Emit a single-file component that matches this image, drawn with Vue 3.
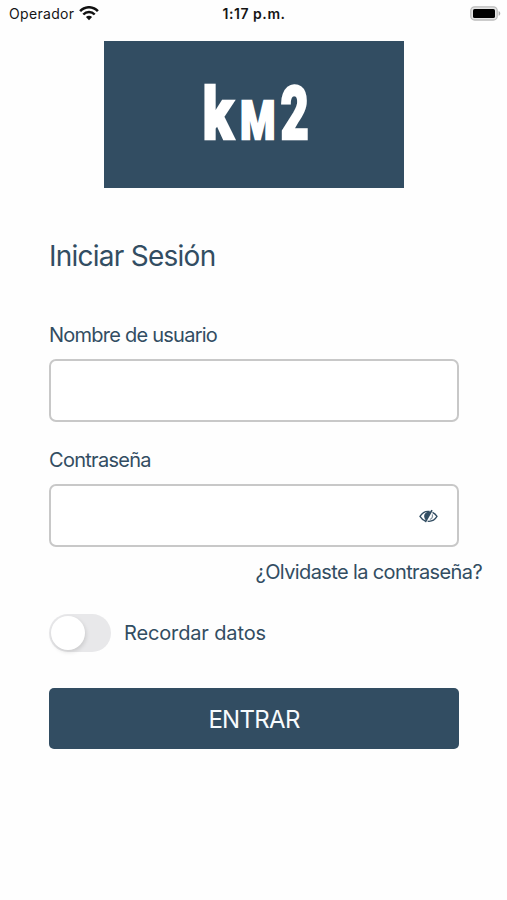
<script setup>
import { ref } from 'vue'

const username = ref('')
const password = ref('')
const remember = ref(false)
const visible = ref(false)
</script>

<template>
  <div class="screen">
    <header class="status">
      <div class="carrier">
        <span class="operator">Operador</span>
        <svg class="wifi" width="20" height="15" viewBox="0 0 20 15" aria-hidden="true">
          <g fill="none" stroke="#111" stroke-width="2.5">
            <path d="M1.1 5.2C6-0.1 14-0.1 18.9 5.2" />
            <path d="M4.3 8.5C7.5 5.2 12.5 5.2 15.7 8.5" />
          </g>
          <path d="M6.9 11C8.7 9.3 11.3 9.3 13.1 11L10 14.2Z" fill="#111" />
        </svg>
      </div>
      <span class="time">1:17 p.m.</span>
      <svg class="battery" width="31" height="15" viewBox="0 0 31 15" aria-hidden="true">
        <rect x="0.8" y="0.8" width="26.4" height="13.2" rx="3.8" fill="#e4e4e4" stroke="#bcbcbc" stroke-width="1.3" />
        <rect x="3" y="3" width="22" height="9" rx="1.6" fill="#000" />
        <path d="M28.6 5C30.8 5.8 30.8 9 28.6 9.8Z" fill="#aaa" />
      </svg>
    </header>

    <main class="content">
      <svg class="logo" width="300" height="147" viewBox="0 0 300 147" role="img">
        <rect width="300" height="147" fill="#324d62" />
        <g class="brand">
          <text transform="translate(98.7 98) scale(0.78 1)" font-size="72">k</text>
          <text transform="translate(136.2 98) scale(0.74 1)" font-size="54">M</text>
          <text transform="translate(176.6 98) scale(0.66 1)" font-size="74">2</text>
        </g>
      </svg>

      <form class="form" @submit.prevent>
        <h1 class="title">Iniciar Sesión</h1>
        <label class="label user-label" for="user">Nombre de usuario</label>
        <div class="field">
          <input id="user" v-model="username" type="text" />
        </div>
        <label class="label pass-label" for="pass">Contraseña</label>
        <div class="field">
          <input id="pass" v-model="password" :type="visible ? 'text' : 'password'" />
          <button class="eye" type="button" @click="visible = !visible">
            <svg width="19" height="15" viewBox="0 0 19 15" aria-hidden="true">
              <path d="M10.5 2.5C6.5 1.8 3 4.2 1 7.4C2.3 9.6 4.3 11.1 6.2 11.8" fill="none" stroke="#324d62" stroke-width="1.4" />
              <path d="M13.5 3.4C15.5 4.4 17 5.8 18 7.4C16 10.7 12.8 12.7 8.6 12.2" fill="none" stroke="#324d62" stroke-width="1.3" />
              <path d="M11.9 2.6C7 2.2 4.8 5 5.2 7.8C5.5 9.4 6.2 10.7 7.2 11.3Z" fill="#324d62" />
              <path d="M13 1.2L6.3 13" stroke="#324d62" stroke-width="1.6" />
              <path d="M13.3 5.3C14 7.7 13 9.5 10.8 10.5" fill="none" stroke="#8293a0" stroke-width="1.2" />
            </svg>
          </button>
        </div>
        <a class="forgot">¿Olvidaste la contraseña?</a>
        <div class="remember">
          <button class="switch" :class="{ on: remember }" type="button" @click="remember = !remember">
            <span class="knob"></span>
          </button>
          <span class="remember-text">Recordar datos</span>
        </div>
        <button class="submit" type="submit"><span class="submit-text">ENTRAR</span></button>
      </form>
    </main>
  </div>
</template>

<style>
body {
  background: #fefefe;
}
</style>

<style scoped>
.screen {
  width: 507px;
  height: 900px;
  overflow: hidden;
  box-sizing: border-box;
  background: #fefefe;
  color: #324d62;
  font-family: Inter, "Liberation Sans", sans-serif;
}
.status {
  display: grid;
  grid-template-columns: 1fr auto 1fr;
  align-items: center;
  height: 27px;
  padding: 0 6px 0 9px;
  color: #151515;
  font-size: 14px;
  line-height: 20px;
}
.carrier {
  display: flex;
  align-items: center;
  gap: 4px;
  letter-spacing: 0.32px;
}
.wifi {
  margin-left: 1px;
}
.time {
  margin-right: 2px;
  font-weight: 600;
  letter-spacing: 0.55px;
}
.battery {
  justify-self: end;
}
.content {
  display: flex;
  flex-direction: column;
  align-items: center;
  padding: 14px 0 0 1px;
}
.logo {
  display: block;
}
.brand {
  fill: #fff;
  stroke: #fff;
  stroke-width: 2.4px;
  font-family: Roboto, sans-serif;
  font-weight: 900;
}
.form {
  display: flex;
  flex-direction: column;
  align-items: flex-start;
  width: 410px;
  margin-top: 50px;
}
.title {
  margin: 0;
  font-size: 28px;
  font-weight: 400;
  letter-spacing: -0.75px;
  line-height: 36px;
}
.label {
  font-size: 20px;
  letter-spacing: -0.72px;
  line-height: 26px;
}
.user-label {
  margin-top: 48px;
  letter-spacing: -0.76px;
}
.pass-label {
  margin-top: 25px;
}
.field {
  display: flex;
  align-items: center;
  box-sizing: border-box;
  width: 410px;
  height: 63px;
  margin-top: 11px;
  padding-right: 19px;
  border: 2px solid #c8c8c8;
  border-radius: 7px;
  background: #fff;
}
.field input {
  flex: 1;
  min-width: 0;
  padding: 0 14px;
  border: 0;
  outline: 0;
  background: transparent;
  color: inherit;
  font: inherit;
  font-size: 20px;
}
button {
  padding: 0;
  border: 0;
  background: none;
  color: inherit;
  font: inherit;
}
.eye {
  display: flex;
  margin-top: 2px;
}
.forgot {
  align-self: flex-end;
  margin: 12px -23px 0 0;
  font-size: 20px;
  letter-spacing: -0.62px;
  line-height: 26px;
  white-space: nowrap;
}
.remember {
  display: flex;
  align-items: center;
  gap: 13px;
  margin-top: 29px;
  font-size: 20px;
  letter-spacing: -0.14px;
  line-height: 26px;
}
.switch {
  display: flex;
  align-items: center;
  width: 62px;
  height: 38px;
  padding: 0 2px;
  box-sizing: border-box;
  border-radius: 19px;
  background: #e8e8ea;
}
.switch.on {
  justify-content: flex-end;
  background: #324d62;
}
.knob {
  width: 34px;
  height: 34px;
  border-radius: 50%;
  background: #fff;
  box-shadow: 1px 2px 4px rgba(0, 0, 0, 0.13);
}
.submit {
  box-sizing: border-box;
  width: 410px;
  height: 61px;
  margin-top: 36px;
  padding-top: 2px;
  border-radius: 5px;
  background: #324d62;
  color: #f7fbfd;
  font-size: 24px;
  letter-spacing: -0.7px;
  line-height: 30px;
}
</style>
